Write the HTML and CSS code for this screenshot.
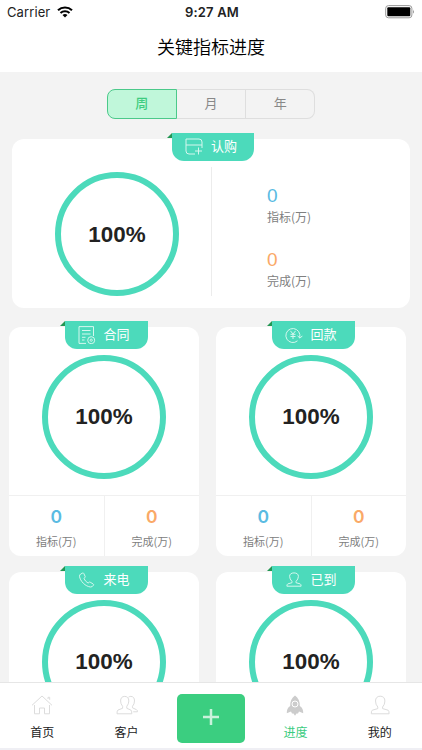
FILE: index.html
```html
<!DOCTYPE html>
<html lang="zh-CN">
<head>
<meta charset="utf-8">
<meta name="viewport" content="width=device-width, initial-scale=1">
<title>关键指标进度</title>
<link rel="stylesheet" href="styles.css">
</head>
<body>
<div class="app">
    <div class="status-bar">
        <div class="carrier">
            <span>Carrier</span>
            <svg width="16" height="12" viewBox="0 0 16 12" fill="none" stroke="#000" stroke-width="2.1">
                <path d="M1 4.3a10.3 10.3 0 0 1 14 0M3.5 7a6.7 6.7 0 0 1 9 0"/>
                <path d="M8 11.6L5.5 9.1a3.6 3.6 0 0 1 5 0z" fill="#000" stroke="none"/>
            </svg>
        </div>
        <div class="time">9:27 AM</div>
        <div class="battery">
            <svg width="30" height="14" viewBox="0 0 30 14">
                <rect x=".7" y=".6" width="26.2" height="12.2" rx="2.8" fill="#fff" stroke="#999"/>
                <rect x="2.3" y="2.2" width="23" height="9" rx="1" fill="#000"/>
                <path d="M28 4.6q1.6 2 0 4.1z" fill="#888"/>
            </svg>
        </div>
    </div>
    <h1 class="title">关键指标进度</h1>

    <div class="content">
        <div class="segment">
            <button class="active">周</button>
            <button>月</button>
            <button>年</button>
        </div>

        <div class="card wide">
            <div class="tag">
                <svg width="18" height="18" viewBox="0 0 18 18">
                    <path d="M10 16H4a3 3 0 0 1-3-3V1h13a3 3 0 0 1 3 3v6M1 7h16M13.5 9.5v7M10 13h7"/>
                </svg>
                <span>认购</span>
            </div>
            <div class="wide-body">
                <div class="left"><div class="ring">100%</div></div>
                <div class="right">
                    <div class="num blue">0</div>
                    <div class="label">指标(万)</div>
                    <div class="num orange">0</div>
                    <div class="label">完成(万)</div>
                </div>
            </div>
        </div>

        <div class="grid">
            <div class="card">
                <div class="tag">
                    <svg width="18" height="18" viewBox="0 0 18 18">
                        <path d="M8 17.4H1V.6h14.5V10M4 4.5h8.5M4 8h8.5M4 11.3h3.5M4 14h2.5"/>
                        <circle cx="13.2" cy="14.2" r="3.5"/><circle cx="13.2" cy="14.2" r="1.1"/>
                    </svg>
                    <span>合同</span>
                </div>
                <div class="ring">100%</div>
                <div class="stats">
                    <div><div class="num blue">0</div><div class="label">指标(万)</div></div>
                    <div><div class="num orange">0</div><div class="label">完成(万)</div></div>
                </div>
            </div>
            <div class="card">
                <div class="tag">
                    <svg width="18" height="18" viewBox="0 0 18 18">
                        <path d="M12.5 14.8A7 7 0 1 1 14.8 8.5V12M12.5 9.8l2.5 2.4 2.4-2.4M5.4 4.8L8 8l2.6-3.2M8 8v5M5.5 8.3h5M5.5 10.5h5"/>
                    </svg>
                    <span>回款</span>
                </div>
                <div class="ring">100%</div>
                <div class="stats">
                    <div><div class="num blue">0</div><div class="label">指标(万)</div></div>
                    <div><div class="num orange">0</div><div class="label">完成(万)</div></div>
                </div>
            </div>
            <div class="card">
                <div class="tag">
                    <svg width="18" height="18" viewBox="0 0 18 18">
                        <path d="M2.7 3L4.8 2q.7-.2 1 .5l1.4 3q.3.7-.3 1.1l-1 .8q1.2 3 4.2 4.7l1-.8q.5-.5 1.1-.1l3 1.8q.7.4.3 1.1-1.1 2-2.9 1.9C7.5 15.600 2 10 1.500 5.200Q1.500 3.800 2.700 3z"/>
                    </svg>
                    <span>来电</span>
                </div>
                <div class="ring">100%</div>
            </div>
            <div class="card">
                <div class="tag">
                    <svg width="18" height="18" viewBox="0 0 18 18">
                        <path d="M7 10.500Q4.600 8 4.600 5.300C4.600 3.200 6.200 1.900 9 1.900s4.400 1.300 4.400 3.400Q13.400 8 11 10.500v1.200l4.200 1.200q.9.400.9 2.300H1.900q0-1.900.9-2.300L7 11.700z"/>
                    </svg>
                    <span>已到</span>
                </div>
                <div class="ring">100%</div>
            </div>
        </div>
    </div>

    <div class="nav">
        <a class="item">
            <svg width="22" height="22" viewBox="0 0 22 22">
                <path d="M1 11.300L11 2l10 9.300M3.500 11v8.800h5V14h5v5.800h5V11M17 5V3.300h1.700v2.500"/>
            </svg>
            <span>首页</span>
        </a>
        <a class="item">
            <svg width="22" height="22" viewBox="0 0 22 22">
                <path d="M6.600 12.300Q4.600 10 4.600 7C4.600 4 6 2.400 8.700 2.400s4.100 1.600 4.100 4.600q0 3-2 5.300v2l4 1.700q1 .5 1 3.800H1q0-3.300 1-3.800l4.600-1.700z"/>
                <path d="M12.500 3.200Q13.300 2.400 14.800 2.400c2.600 0 3.700 1.700 3.700 4.600q0 3-2 5.300v1.500l4 1.900q1.300.7.900 2.100h-4.200"/>
            </svg>
            <span>客户</span>
        </a>
        <div class="item">
            <button class="add" title="新增">
                <svg width="18" height="18" viewBox="0 0 18 18"><path d="M9 1v16M1 9h16"/></svg>
            </button>
        </div>
        <a class="item current">
            <svg width="22" height="22" viewBox="0 0 22 22">
                <path class="solid" d="M11 1.500Q16 5 15.800 12q3.700 2.300 3.400 7.200L15 17.500l-1 2h-1.500L11 21.800l-1.500-2.300H8l-1-2-4.200 1.700Q2.500 14.300 6.200 12 6 5 11 1.500z"/>
                <circle cx="11" cy="10" r="3" stroke="#fff"/>
            </svg>
            <span>进度</span>
        </a>
        <a class="item">
            <svg width="22" height="22" viewBox="0 0 22 22">
                <path d="M8.800 13Q6.500 10.500 6.500 7C6.500 4 8.200 2.200 11.200 2.200S15.900 4 15.900 7q0 3.500-2.300 6v1.600l5.500 1.600q1 .4 1 3.600H2.300q0-3.200 1-3.600l5.500-1.600z"/>
            </svg>
            <span>我的</span>
        </a>
    </div>
</div>
</body>
</html>
```
FILE: styles.css
```css
* {
    box-sizing: border-box;
}
body {
    margin: 0;
    background-color: #fff;
    font-family: "Liberation Sans", "Noto Sans CJK SC", sans-serif;
    color: #222;
}
.app {
    display: flex;
    flex-direction: column;
    width: 422px;
    height: 750px;
    overflow: hidden;
}
svg {
    display: block;
}

.status-bar {
    display: grid;
    grid-template-columns: 1fr auto 1fr;
    align-items: center;
    height: 24px;
    padding: 0 7px;
    font-family: Inter, sans-serif;
    font-size: 13px;
    line-height: 24px;
}
.carrier {
    display: flex;
    align-items: center;
    gap: 7px;
    letter-spacing: 0.1px;
}
.time {
    font-weight: 600;
    padding-left: 2px;
    letter-spacing: 0.15px;
}
.battery {
    justify-self: end;
}
.title {
    height: 48px;
    margin: 0;
    color: #000;
    font-size: 18px;
    font-weight: 350;
    line-height: 48px;
    text-align: center;
}

.content {
    flex: 1;
    min-height: 0;
    overflow: hidden;
    padding-top: 17px;
    background-color: #f3f3f3;
}
.segment {
    display: flex;
    width: 209px;
    height: 30px;
    margin: 0 auto;
}
.segment button {
    flex: 1;
    border: 1px solid #dedede;
    border-left-width: 0;
    padding: 0;
    background: none;
    color: #888;
    font-family: inherit;
    font-size: 13px;
    line-height: 26px;
}
.segment button:last-child {
    border-radius: 0 8px 8px 0;
}
.segment .active {
    border: 1px solid #4bc98a;
    border-radius: 8px 0 0 8px;
    background-color: #c0f7da;
    color: #3dcc80;
    font-weight: 500;
}

.card {
    display: flex;
    flex-direction: column;
    align-items: center;
    height: 229px;
    border-radius: 12px;
    background-color: #fff;
}
.wide {
    height: 169px;
    margin: 20px 12px 0;
}
.tag {
    position: relative;
    display: flex;
    flex: none;
    align-items: center;
    gap: 8px;
    width: 83px;
    height: 28px;
    margin-top: -6px;
    margin-left: 4px;
    padding-left: 13px;
    border-radius: 0 0 12px 12px;
    background-color: #4cdabb;
    color: #fff;
    font-size: 13px;
    line-height: 26px;
}
.wide .tag {
    width: 82px;
}
/* folded corner of the tag */
.tag::before {
    content: "";
    position: absolute;
    top: 0;
    left: -5px;
    border-left: 5px solid transparent;
    border-bottom: 5px solid #239653;
}
.tag svg {
    fill: none;
    stroke: #d5f7ee;
    stroke-width: 1;
}
.ring {
    flex: none;
    width: 124px;
    height: 124px;
    margin-top: 6px;
    border: 6px solid #4cdabb;
    border-radius: 50%;
    font-size: 22.4px;
    font-weight: bold;
    line-height: 112px;
    text-align: center;
}
.wide-body {
    display: flex;
    width: 100%;
    margin-top: 6px;
}
.left {
    width: 200px;
    height: 129px;
    padding: 5px 0 0 43px;
    border-right: 1px solid #ececec;
}
.left .ring {
    margin-top: 0;
    line-height: 113px;
}
.right {
    padding: 18px 0 0 55px;
}
.num {
    font-size: 19px;
    line-height: 22px;
}
.label {
    color: #808080;
    font-family: "Noto Sans CJK SC", sans-serif;
    font-size: 11px;
    line-height: 18px;
}
.right .label {
    margin: 1px 0 23px;
    font-size: 12px;
}
.blue {
    color: #5abbe2;
}
.orange {
    color: #faa967;
}

.grid {
    display: grid;
    grid-template-columns: 190px 190px;
    gap: 16px 17px;
    margin: 19px 0 0 9px;
}
.stats {
    display: flex;
    flex: 1;
    width: 100%;
    margin-top: 16px;
    border-top: 1px solid #f0f0f0;
    text-align: center;
}
.stats > div {
    flex: 1;
    padding-top: 10px;
}
.stats > div + div {
    border-left: 1px solid #f0f0f0;
}
.stats .num {
    font-family: Inter, sans-serif;
    font-size: 17.5px;
    font-weight: 600;
}
.stats .label {
    margin-top: 4px;
}

.nav {
    display: flex;
    flex: none;
    height: 68px;
    border-top: 1px solid #e6e6e6;
    border-bottom: 2px solid #efeff4;
    background-color: #fff;
}
.item {
    display: flex;
    flex: 1;
    flex-direction: column;
    align-items: center;
    padding-top: 11px;
    font-size: 12px;
    line-height: 18px;
}
.item span {
    margin-top: 8px;
}
.item svg {
    fill: none;
    stroke: #dcdcdc;
    stroke-width: 1;
}
.item .solid {
    fill: #ccc;
    stroke: none;
}
.current {
    color: #3acc7e;
}
.add {
    display: flex;
    align-items: center;
    justify-content: center;
    width: 68px;
    height: 49px;
    border: none;
    border-radius: 5px;
    background-color: #3bce80;
    padding: 0 0 3px;
}
.add svg {
    stroke: #c9f2db;
    stroke-width: 2.5;
}
```
